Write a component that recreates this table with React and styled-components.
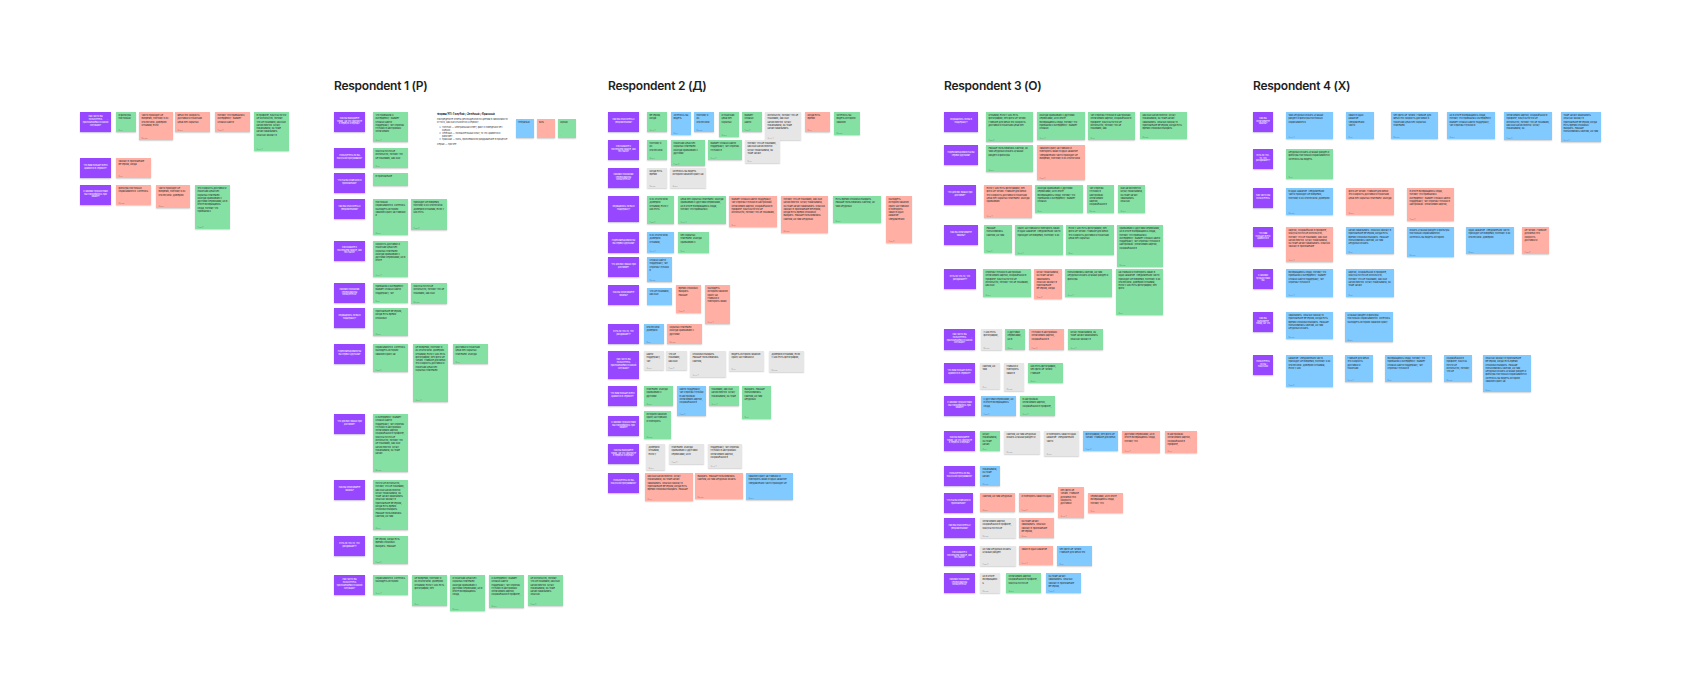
import React from "react";
import styled, { createGlobalStyle } from "styled-components";

// sticky colours used on the board
const COLORS = {
  g: "#85E0A3",
  b: "#80CAFF",
  r: "#FFAFA3",
  e: "#E6E6E6",
};

const TEXT =
  "Обычно захожу в приложение вечером, когда есть время спокойно выбрать. Раньше пользовалась сайтом, но там неудобно искать нужный раздел и фильтры постоянно сбрасываются. " +
  "Хотелось бы видеть историю заказов сразу на главной и повторять заказ в одно нажатие. Уведомления часто приходят не вовремя, поэтому я их отключила. " +
  "Доверяю отзывам, если у них есть фотографии, без фото не читаю. Главное для меня это скорость доставки и понятная цена без скрытых платежей. " +
  "Иногда сравниваю с другими сервисами, но в итоге возвращаюсь сюда, потому что привыкла к интерфейсу. Бывает сложно найти поддержку, чат спрятан глубоко в настройках. " +
  "Оплачиваю картой, сохранённой в профиле, бонусы почти не использую, потому что не понимаю, как они начисляются. Мужу показывала, он тоже начал заказывать. ";

const QUESTIONS = [
  "Как часто вы пользуетесь приложением и в какой ситуации?",
  "Что вам больше всего нравится в сервисе?",
  "С какими трудностями вы сталкивались при заказе?",
  "Как вы выбираете товар, на что смотрите в первую очередь?",
  "Пользуетесь ли вы бонусной программой?",
  "Что бы вы изменили в приложении?",
  "Как вы относитесь к уведомлениям?",
  "Расскажите о последнем заказе, как это было?",
  "Какими похожими сервисами вы пользуетесь?",
  "Обращались ли вы в поддержку?",
  "Порекомендовали бы вы сервис друзьям?",
  "Что для вас важно при доставке?",
  "Как вы оплачиваете заказы?",
  "Есть ли что-то, что раздражает?",
];

const AUTHORS = ["Анна К.", "Олег", "Мария", "Дима", "Катя Л."];

// rows: [y, question width, question height, notes[[x, w, h, colour, dy?]]]
const SECTIONS = [
  {
    x: 80,
    w: 254,
    rows: [
      [112, 31, 20, [[116, 20, 20, "g"], [139, 34, 28, "r"], [175, 35, 20, "r"], [215, 35, 20, "r"], [254, 35, 39, "g"]]],
      [158, 31, 20, [[116, 35, 20, "r"]]],
      [185, 31, 20, [[116, 35, 20, "r"], [156, 34, 23, "r"], [195, 35, 44, "g"]]],
    ],
  },
  {
    x: 334,
    w: 274,
    title: "Respondent 1 (Р)",
    brief: true,
    rows: [
      [112, 31, 20, [[373, 35, 30, "g"]]],
      [148, 31, 20, [[373, 35, 20, "g"]]],
      [173, 31, 20, [[373, 35, 13, "g"]]],
      [199, 31, 20, [[373, 35, 36, "g"], [411, 36, 31, "g"]]],
      [241, 31, 20, [[373, 35, 36, "g"]]],
      [283, 31, 20, [[373, 35, 20, "g"], [411, 36, 21, "g"]]],
      [308, 31, 20, [[373, 35, 28, "g"]]],
      [344, 31, 20, [[373, 35, 28, "g"], [413, 35, 58, "g"], [453, 35, 20, "g"]]],
      [414, 31, 20, [[373, 35, 58, "g"]]],
      [480, 31, 20, [[373, 35, 50, "g"]]],
      [536, 31, 20, [[373, 35, 28, "g"]]],
      [575, 31, 20, [[373, 35, 20, "g"], [412, 35, 31, "g"], [450, 35, 36, "g"], [489, 35, 33, "g"], [528, 35, 31, "g"]]],
    ],
  },
  {
    x: 608,
    w: 336,
    title: "Respondent 2 (Д)",
    rows: [
      [112, 31, 20, [[647, 20, 20, "g"], [671, 20, 23, "b"], [694, 20, 20, "b"], [719, 20, 25, "g"], [742, 20, 20, "g"], [765, 36, 28, "e"], [805, 25, 20, "r"], [834, 26, 23, "g"]]],
      [140, 31, 20, [[647, 20, 20, "g"], [671, 34, 26, "g"], [708, 34, 20, "g"], [745, 35, 23, "e"]]],
      [168, 31, 20, [[647, 20, 20, "e"], [670, 36, 20, "e"]]],
      [196, 31, 26, [[647, 27, 28, "g"], [678, 48, 28, "g"], [729, 48, 31, "r"], [781, 47, 37, "r"], [833, 48, 27, "g"], [886, 26, 47, "r"]]],
      [232, 31, 21, [[647, 27, 21, "b"], [678, 31, 21, "g"]]],
      [257, 31, 20, [[647, 25, 25, "b"]]],
      [285, 31, 20, [[647, 25, 17, "b", 3], [676, 25, 28, "r"], [705, 25, 39, "r"]]],
      [324, 31, 20, [[644, 20, 20, "b"], [667, 35, 20, "r"]]],
      [351, 31, 28, [[644, 20, 19, "e"], [666, 21, 19, "e"], [690, 36, 26, "e"], [729, 35, 20, "e"], [769, 35, 21, "e"]]],
      [386, 29, 20, [[644, 29, 20, "g"], [677, 29, 30, "b"], [709, 30, 20, "g"], [742, 29, 33, "g"]]],
      [416, 31, 20, [[644, 27, 28, "g", -5]]],
      [444, 31, 20, [[646, 19, 26, "e"], [669, 35, 20, "e"], [708, 34, 24, "e"]]],
      [473, 31, 20, [[645, 48, 28, "r"], [695, 48, 26, "r"], [746, 47, 27, "b"]]],
    ],
  },
  {
    x: 944,
    w: 309,
    title: "Respondent 3 (О)",
    rows: [
      [112, 34, 20, [[986, 47, 30, "g"], [1037, 48, 28, "g"], [1088, 47, 28, "g"], [1140, 47, 27, "g"]]],
      [145, 34, 20, [[986, 47, 27, "g"], [1037, 48, 35, "r"]]],
      [185, 32, 20, [[984, 48, 33, "r"], [1035, 48, 28, "g"], [1087, 27, 28, "g"], [1118, 27, 28, "g"]]],
      [225, 34, 20, [[984, 28, 28, "g"], [1015, 48, 30, "g"], [1066, 48, 30, "g"], [1117, 46, 42, "g"]]],
      [269, 32, 20, [[983, 48, 28, "g"], [1034, 28, 30, "r"], [1065, 47, 28, "g"], [1116, 47, 46, "g"]]],
      [329, 31, 21, [[981, 21, 21, "e"], [1005, 20, 21, "g"], [1029, 35, 21, "r"], [1068, 35, 21, "g"]]],
      [363, 31, 20, [[980, 20, 26, "e"], [1004, 20, 28, "e"], [1028, 35, 20, "g"]]],
      [396, 31, 20, [[981, 35, 20, "b"], [1020, 35, 20, "g"]]],
      [431, 31, 20, [[980, 20, 20, "g"], [1004, 36, 23, "e"], [1044, 35, 25, "e"], [1083, 35, 20, "b"], [1122, 38, 22, "r"], [1165, 32, 22, "r"]]],
      [466, 31, 20, [[980, 20, 20, "b"]]],
      [493, 29, 20, [[980, 35, 19, "r"], [1019, 35, 19, "r"], [1058, 26, 31, "r", -6], [1088, 35, 20, "r"]]],
      [518, 31, 20, [[980, 36, 20, "e"], [1019, 35, 20, "r"]]],
      [546, 31, 20, [[980, 36, 20, "e"], [1019, 34, 19, "r"], [1057, 35, 20, "b"]]],
      [573, 31, 20, [[980, 20, 20, "e"], [1006, 35, 20, "g"], [1046, 35, 20, "b"]]],
    ],
  },
  {
    x: 1253,
    w: 437,
    title: "Respondent 4 (Х)",
    rows: [
      [112, 20, 20, [[1286, 47, 27, "b"], [1346, 28, 27, "b"], [1391, 47, 27, "b"], [1447, 48, 27, "b"], [1504, 48, 28, "b"], [1561, 40, 30, "b"]]],
      [149, 20, 20, [[1286, 47, 30, "g"]]],
      [188, 20, 20, [[1286, 47, 27, "b"], [1346, 48, 27, "r"], [1407, 47, 33, "r"]]],
      [227, 20, 20, [[1286, 47, 35, "r"], [1346, 48, 27, "b"], [1407, 47, 30, "b"], [1466, 48, 27, "b"], [1522, 27, 27, "r"]]],
      [269, 20, 20, [[1286, 47, 28, "b"], [1346, 48, 28, "b"]]],
      [312, 20, 20, [[1286, 47, 27, "b"], [1345, 48, 30, "b"]]],
      [355, 20, 20, [[1286, 47, 32, "b"], [1345, 28, 27, "b"], [1385, 47, 27, "b"], [1444, 28, 27, "b"], [1483, 48, 37, "b"]]],
    ],
  },
];

const GlobalStyle = createGlobalStyle`
  html, body {
    margin: 0;
    padding: 0;
    background: #ffffff;
  }
  body {
    font-family: Inter, "Noto Sans", sans-serif;
  }
`;

const Board = styled.main`
  display: flex;
  align-items: flex-start;
  width: 1690px;
  height: 693px;
  padding: 78px 0 0 80px;
  box-sizing: border-box;
  overflow: hidden;
  background: #ffffff;
`;

const Section = styled.section`
  flex: 0 0 ${(p) => p.$w}px;
  display: flex;
  flex-direction: column;
`;

const Title = styled.h2`
  margin: 0;
  height: 34px;
  padding-top: 1px;
  box-sizing: border-box;
  font: 600 12px/14px Inter, "Noto Sans", sans-serif;
  letter-spacing: -0.25px;
  color: #1e1e1e;
  white-space: nowrap;
`;

const Row = styled.div`
  display: flex;
  align-items: flex-start;
  height: ${(p) => (p.$h ? `${p.$h}px` : "auto")};
`;

const Question = styled.div`
  flex: 0 0 ${(p) => p.$w}px;
  height: ${(p) => p.$h}px;
  display: flex;
  align-items: center;
  justify-content: center;
  padding: 2px 2.5px;
  box-sizing: border-box;
  background: #9747ff;
  box-shadow: 0 0.5px 1.2px rgba(40, 0, 90, 0.25);
  color: #ffffff;
  font-size: 2.2px;
  line-height: 2.9px;
  text-align: center;
  overflow-wrap: anywhere;
`;

const Sticky = styled.div`
  flex: 0 0 ${(p) => p.$w}px;
  height: ${(p) => p.$h}px;
  margin-left: ${(p) => p.$ml}px;
  margin-top: ${(p) => p.$mt || 0}px;
  display: flex;
  flex-direction: column;
  justify-content: space-between;
  padding: 2px 2.5px 1.5px;
  box-sizing: border-box;
  background: ${(p) => COLORS[p.$c]};
  box-shadow: 0 0.5px 1.2px rgba(0, 0, 0, 0.18);
`;

const StickyText = styled.p`
  margin: 0;
  font-size: 2.4px;
  line-height: 3.3px;
  color: #2a2a2a;
  overflow-wrap: anywhere;
`;

const StickyAuthor = styled.span`
  font-size: 1.8px;
  line-height: 2px;
  color: rgba(0, 0, 0, 0.38);
`;

const Brief = styled.div`
  flex: 0 0 73px;
  margin: 1px 0 0 29px;
  font-size: 2.3px;
  line-height: 3.1px;
  color: #3a3a3a;
`;

const BriefTitle = styled.div`
  margin-bottom: 2px;
  font-size: 2.8px;
  font-weight: 700;
  color: #111111;
`;

const BriefList = styled.ol`
  margin: 1.5px 0 2px;
  padding-left: 5px;
`;

const Legend = styled.div`
  display: flex;
  gap: 3px;
  margin: 7px 0 0 6px;
`;

const LegendChip = styled.div`
  display: flex;
  flex-direction: column;
  justify-content: space-between;
  width: 18px;
  height: 19px;
  padding: 2px;
  box-sizing: border-box;
  background: ${(p) => COLORS[p.$c]};
  box-shadow: 0 0.5px 1.2px rgba(0, 0, 0, 0.18);
  font-size: 2px;
  line-height: 2.4px;
  color: #2a2a2a;
`;

// cut a string at a word boundary so it never exceeds max characters
const clip = (s, max) => {
  if (s.length <= max) return s.trim();
  const cut = s.slice(0, max);
  const sp = cut.lastIndexOf(" ");
  return (sp > max * 0.5 ? cut.slice(0, sp) : cut).trim();
};

let seed = 0;
const pick = (w, h, withAuthor) => {
  seed += 1;
  const lines = Math.max(1, Math.floor((h - 4 - (withAuthor ? 2.5 : 0)) / 3.3));
  const perLine = Math.floor((w - 5) / 1.45);
  const fill = 0.45 + ((seed * 7) % 6) * 0.08;
  const len = Math.max(8, Math.floor(lines * perLine * Math.min(fill, 0.82)));
  const start = (seed * 131) % TEXT.length;
  const from = TEXT.indexOf(" ", start) + 1;
  return clip((TEXT + TEXT).slice(from, from + len + 20), len);
};

const Note = ({ w, h, c, ml, mt }) => {
  const withAuthor = h > 17;
  const text = pick(w, h, withAuthor);
  return (
    <Sticky $w={w} $h={h} $c={c} $ml={ml} $mt={mt}>
      <StickyText>{text}</StickyText>
      {withAuthor && <StickyAuthor>{AUTHORS[seed % AUTHORS.length]}</StickyAuthor>}
    </Sticky>
  );
};

const Instructions = () => (
  <>
    <Brief>
      <BriefTitle>Форма УП: Голубой / Зелёный / Красный</BriefTitle>
      Распределите ответы респондентов по цветам в зависимости от того, как они относятся к сервису.
      <BriefList>
        <li>Голубой — нейтральный ответ, факт о поведении без оценки</li>
        <li>Зелёный — положительный опыт, то что нравится и работает</li>
        <li>Красный — боль, проблема или раздражение в процессе</li>
      </BriefList>
      Серый — прочее
    </Brief>
    <Legend>
      <LegendChip $c="b">
        <span>Нейтрально</span>
        <span>·</span>
      </LegendChip>
      <LegendChip $c="r">
        <span>Боль</span>
        <span>·</span>
      </LegendChip>
      <LegendChip $c="g">
        <span>Хорошо</span>
        <span>·</span>
      </LegendChip>
    </Legend>
  </>
);

const questionText = (i, w, h) => {
  const lines = Math.floor((h - 4) / 2.9);
  const perLine = Math.floor((w - 5) / 1.35);
  return clip(QUESTIONS[i % QUESTIONS.length], Math.floor(lines * perLine * 0.6));
};

const Respondent = ({ section, index }) => {
  const { x, w, title, rows, brief } = section;
  return (
    <Section $w={w}>
      <Title aria-hidden={!title}>{title || "\u00a0"}</Title>
      {rows.map(([y, qw, qh, notes], ri) => {
        const next = rows[ri + 1];
        let right = x + qw;
        return (
          <Row key={y} $h={next ? next[0] - y : 0}>
            <Question $w={qw} $h={qh}>
              {questionText(ri + index * 3, qw, qh)}
            </Question>
            {notes.map(([nx, nw, nh, c, dy]) => {
              const ml = nx - right;
              right = nx + nw;
              return <Note key={nx} w={nw} h={nh} c={c} ml={ml} mt={dy} />;
            })}
            {brief && ri === 0 && <Instructions />}
          </Row>
        );
      })}
    </Section>
  );
};

export default function App() {
  seed = 0;
  return (
    <>
      <GlobalStyle />
      <Board>
        {SECTIONS.map((s, i) => (
          <Respondent key={s.x} section={s} index={i} />
        ))}
      </Board>
    </>
  );
}
